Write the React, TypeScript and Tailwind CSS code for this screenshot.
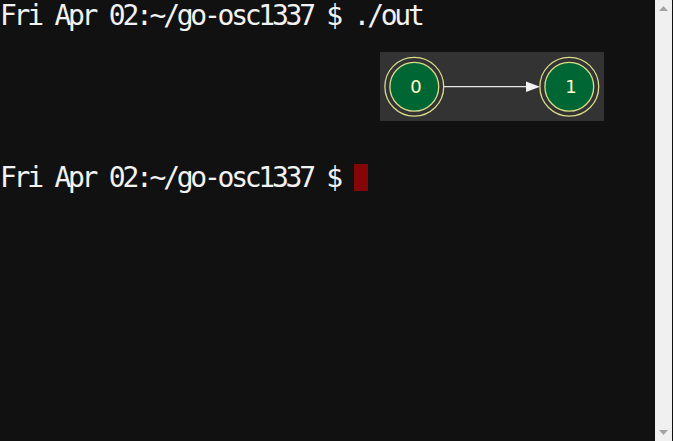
import React from "react";

function Graph() {
  return (
    <div className="w-[224px] h-[69px] bg-[#333333] ml-[380px]">
      <svg width="224" height="69" viewBox="0 0 224 69">
        <line x1="64" y1="34.7" x2="148" y2="34.7" stroke="#e6e6e6" strokeWidth="1.3" />
        <polygon points="146,29.5 160,34.7 146,39.9" fill="#f2f2f2" />
        <g>
          <circle cx="34.3" cy="34.7" r="29.4" fill="none" stroke="#d9dc8a" strokeWidth="1.3" />
          <circle cx="34.3" cy="34.7" r="24.4" fill="#006633" stroke="#d9dc8a" strokeWidth="1.3" />
          <text x="34.3" y="41" textAnchor="middle" fontFamily="'DejaVu Sans', sans-serif" fontSize="18" fill="#ffffcc">0</text>
        </g>
        <g>
          <circle cx="189.3" cy="34.7" r="29.4" fill="none" stroke="#d9dc8a" strokeWidth="1.3" />
          <circle cx="189.3" cy="34.7" r="24.4" fill="#006633" stroke="#d9dc8a" strokeWidth="1.3" />
          <text x="189.3" y="41" textAnchor="middle" fontFamily="'DejaVu Sans', sans-serif" fontSize="18" fill="#ffffcc">1</text>
        </g>
      </svg>
    </div>
  );
}

export default function App() {
  return (
    <div className="w-[673px] h-[441px] flex bg-[#111111] overflow-hidden">
      <div className="flex-1 pt-[2px] text-[28px] leading-[27px] tracking-[-3.26px] text-[#f2f2f2] whitespace-pre font-['DejaVu_Sans_Mono',monospace]">
        <div className="h-[27px]">Fri Apr 02:~/go-osc1337 $ ./out</div>
        <div className="h-[135px] pt-[23px]">
          <Graph />
        </div>
        <div className="h-[27px] flex items-start">
          <span>Fri Apr 02:~/go-osc1337 $ </span>
          <span className="inline-block w-[14px] h-[27px] bg-[#850606]" />
        </div>
      </div>
      <div className="w-[17px] bg-[#f0f0f0] flex flex-col items-center justify-between py-[6px]">
        <svg width="9" height="5" viewBox="0 0 9 5">
          <polygon points="0,5 4.5,0 9,5" fill="#a3a3a3" />
        </svg>
        <svg width="9" height="5" viewBox="0 0 9 5">
          <polygon points="0,0 4.5,5 9,0" fill="#a3a3a3" />
        </svg>
      </div>
      <div className="w-[1px] bg-[#111111]" />
    </div>
  );
}
